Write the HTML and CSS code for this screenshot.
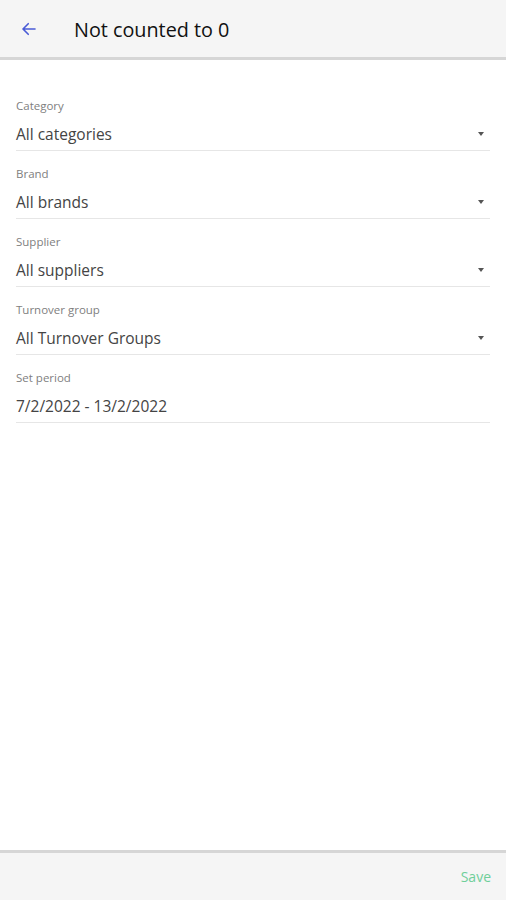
FILE: index.html
```html
<!DOCTYPE html>
<html>
<head>
<meta charset="utf-8">
<link rel="stylesheet" href="styles.css">
</head>
<body>
<div class="app">
  <header class="topbar">
    <span class="back">
      <svg width="18" height="18" viewBox="0 0 24 24"><path d="M20 12H5M11 5l-7 7 7 7" fill="none" stroke="#4a5bd6" stroke-width="2.2" stroke-linecap="round" stroke-linejoin="round"/></svg>
    </span>
    <h1 class="title">Not counted to 0</h1>
  </header>
  <main class="form">
    <div class="field">
      <div class="label">Category</div>
      <div class="value"><span>All categories</span><span class="caret"></span></div>
    </div>
    <div class="field">
      <div class="label">Brand</div>
      <div class="value"><span>All brands</span><span class="caret"></span></div>
    </div>
    <div class="field">
      <div class="label">Supplier</div>
      <div class="value"><span>All suppliers</span><span class="caret"></span></div>
    </div>
    <div class="field">
      <div class="label">Turnover group</div>
      <div class="value"><span>All Turnover Groups</span><span class="caret"></span></div>
    </div>
    <div class="field">
      <div class="label">Set period</div>
      <div class="value"><span>7/2/2022 - 13/2/2022</span></div>
    </div>
  </main>
  <footer class="bottombar">
    <span class="save">Save</span>
  </footer>
</div>
</body>
</html>
```
FILE: styles.css
```css
html, body {
  margin: 0;
  padding: 0;
}
body {
  font-family: "Open Sans", "Noto Sans", sans-serif;
  background: #ffffff;
  color: #333;
}
.app {
  width: 506px;
  height: 900px;
  display: flex;
  flex-direction: column;
}
.topbar {
  height: 57px;
  background: #f5f5f5;
  border-bottom: 3px solid #d6d6d6;
  display: flex;
  align-items: center;
  box-sizing: content-box;
}
.back {
  width: 18px;
  height: 18px;
  margin-left: 20px;
  display: flex;
}
.title {
  margin: 2px 0 0 36px;
  font-size: 19.8px;
  font-weight: 400;
  color: #111;
}
.form {
  flex: 1;
  padding: 38px 16px 0 16px;
  display: flex;
  flex-direction: column;
  gap: 15px;
}
.field {
  display: flex;
  flex-direction: column;
  padding-bottom: 6px;
  border-bottom: 1px solid #e6e6e6;
}
.label {
  font-size: 11.5px;
  color: #808080;
  line-height: 16px;
}
.value {
  margin-top: 10px;
  font-size: 15.5px;
  color: #444;
  line-height: 20px;
  display: flex;
  justify-content: space-between;
  align-items: center;
}
.caret {
  width: 0;
  height: 0;
  border-left: 3.5px solid transparent;
  border-right: 3.5px solid transparent;
  border-top: 4px solid #555;
  margin-right: 6px;
}
.bottombar {
  height: 47px;
  background: #f5f5f5;
  border-top: 3px solid #d6d6d6;
  display: flex;
  align-items: center;
  justify-content: flex-end;
}
.save {
  color: #6fcf9a;
  font-size: 14px;
  margin-right: 15px;
}
```
